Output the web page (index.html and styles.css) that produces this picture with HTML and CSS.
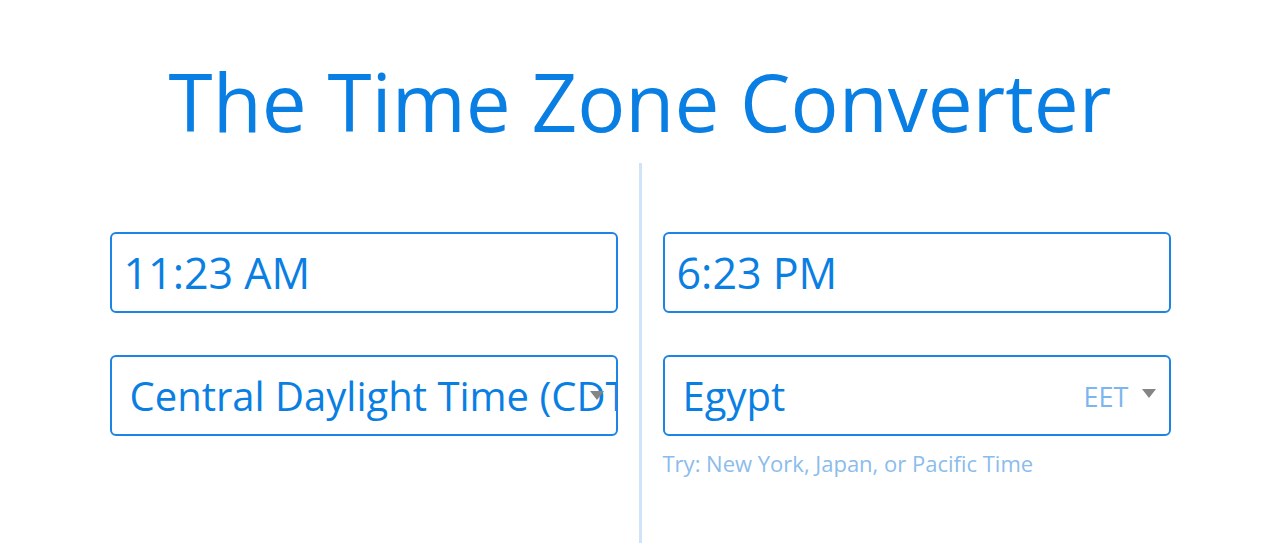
FILE: index.html
```html
<!DOCTYPE html>
<html>
<head>
  <title>The Time Zone Converter</title>
  <link rel="stylesheet" href="styles.css">
</head>
<body>
  <h1 class="title">The Time Zone Converter</h1>
  <div class="converter">
    <div class="side">
      <div class="field time-field">11:23 AM</div>
      <div class="field zone-field">
        <span class="zone-name">Central Daylight Time (CDT)</span>
        <span class="caret caret-left"></span>
      </div>
    </div>
    <div class="divider"></div>
    <div class="side">
      <div class="field time-field">6:23 PM</div>
      <div class="field zone-field">
        <span class="zone-name">Egypt</span>
        <span class="abbr">EET</span>
        <span class="caret"></span>
      </div>
      <div class="hint">Try: New York, Japan, or Pacific Time</div>
    </div>
  </div>
</body>
</html>
```

FILE: styles.css
```css
body {
  font-family: "Open Sans", Arial, sans-serif;
  margin: 0;
  padding: 0;
  color: #0a7fe3;
  background: #fff;
}
.title {
  margin: 0;
  padding-top: 46px;
  height: 117px;
  font-size: 80px;
  font-weight: 400;
  line-height: 110px;
  text-align: center;
  color: #0a7fe3;
}
.converter {
  display: flex;
  justify-content: center;
  gap: 21px;
  height: 380px;
}
.side {
  width: 508px;
  padding-top: 69px;
}
.divider {
  width: 3px;
  background: #cfe4f8;
}
.field {
  box-sizing: border-box;
  height: 81px;
  border: 2px solid #1b84e4;
  border-radius: 6px;
  display: flex;
  align-items: center;
  white-space: nowrap;
  overflow: hidden;
}
.time-field {
  padding-left: 12px;
  font-size: 43px;
  margin-bottom: 42px;
}
.zone-field {
  position: relative;
  padding-left: 18px;
  font-size: 40px;
}
.zone-name {
  flex: 1;
  overflow: hidden;
}
.abbr {
  font-size: 27px;
  color: #7db5ee;
  margin-right: 13px;
  margin-top: 2px;
}
.caret {
  width: 0;
  height: 0;
  border-left: 7px solid transparent;
  border-right: 7px solid transparent;
  border-top: 9px solid #858585;
  margin-right: 13px;
  margin-top: -4px;
}
.caret-left {
  position: absolute;
  right: 12px;
  top: 34px;
  margin: 0;
}
.hint {
  margin-top: 12px;
  font-size: 22px;
  color: #8bbcec;
}
```
